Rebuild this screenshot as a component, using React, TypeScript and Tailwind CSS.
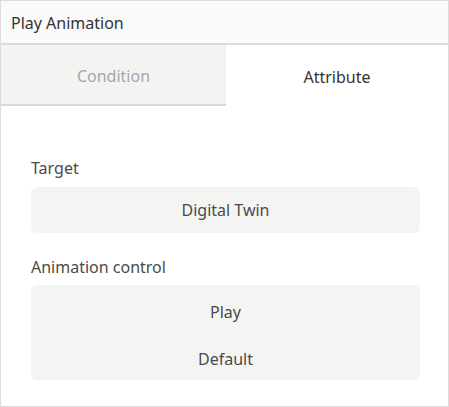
import React from 'react';

const font = { fontFamily: '"Noto Sans", "Open Sans", sans-serif' };

export default function App() {
  return (
    <div className="w-[449px] h-[407px] bg-white" style={font}>
      <div className="flex h-full flex-col border border-[#dcdcdc] bg-white">
        <div className="flex h-[44px] items-center border-b-2 border-[#dadada] bg-[#fafafa] px-[10px] pt-[2px] text-[16px] text-[#333333]">
          Play Animation
        </div>
        <div className="flex h-[61px]">
          <div className="flex w-[225px] items-center justify-center border-b-2 border-[#d9d9d9] bg-[#f3f4f2] pt-[2px] text-[16px] text-[#a6a6a6]">
            Condition
          </div>
          <div className="flex flex-1 items-center justify-center bg-white pt-[2px] text-[16px] text-[#333333]">
            Attribute
          </div>
        </div>
        <div className="flex flex-col pl-[30px] pr-[28px] pt-[51px]">
          <div className="text-[16px] leading-[22px] text-[#4a4a4a]">Target</div>
          <div className="mt-[8px] flex h-[46px] items-center justify-center rounded-md bg-[#f4f5f3] text-[16px] text-[#4a4a4a]">
            Digital Twin
          </div>
          <div className="mt-[23px] text-[16px] leading-[22px] text-[#4a4a4a]">Animation control</div>
          <div className="mt-[7px] flex h-[95px] flex-col items-center justify-center gap-[25px] rounded-md bg-[#f4f5f3] pt-[6px] text-[16px] leading-[22px] text-[#4a4a4a]">
            <div>Play</div>
            <div>Default</div>
          </div>
        </div>
      </div>
    </div>
  );
}
